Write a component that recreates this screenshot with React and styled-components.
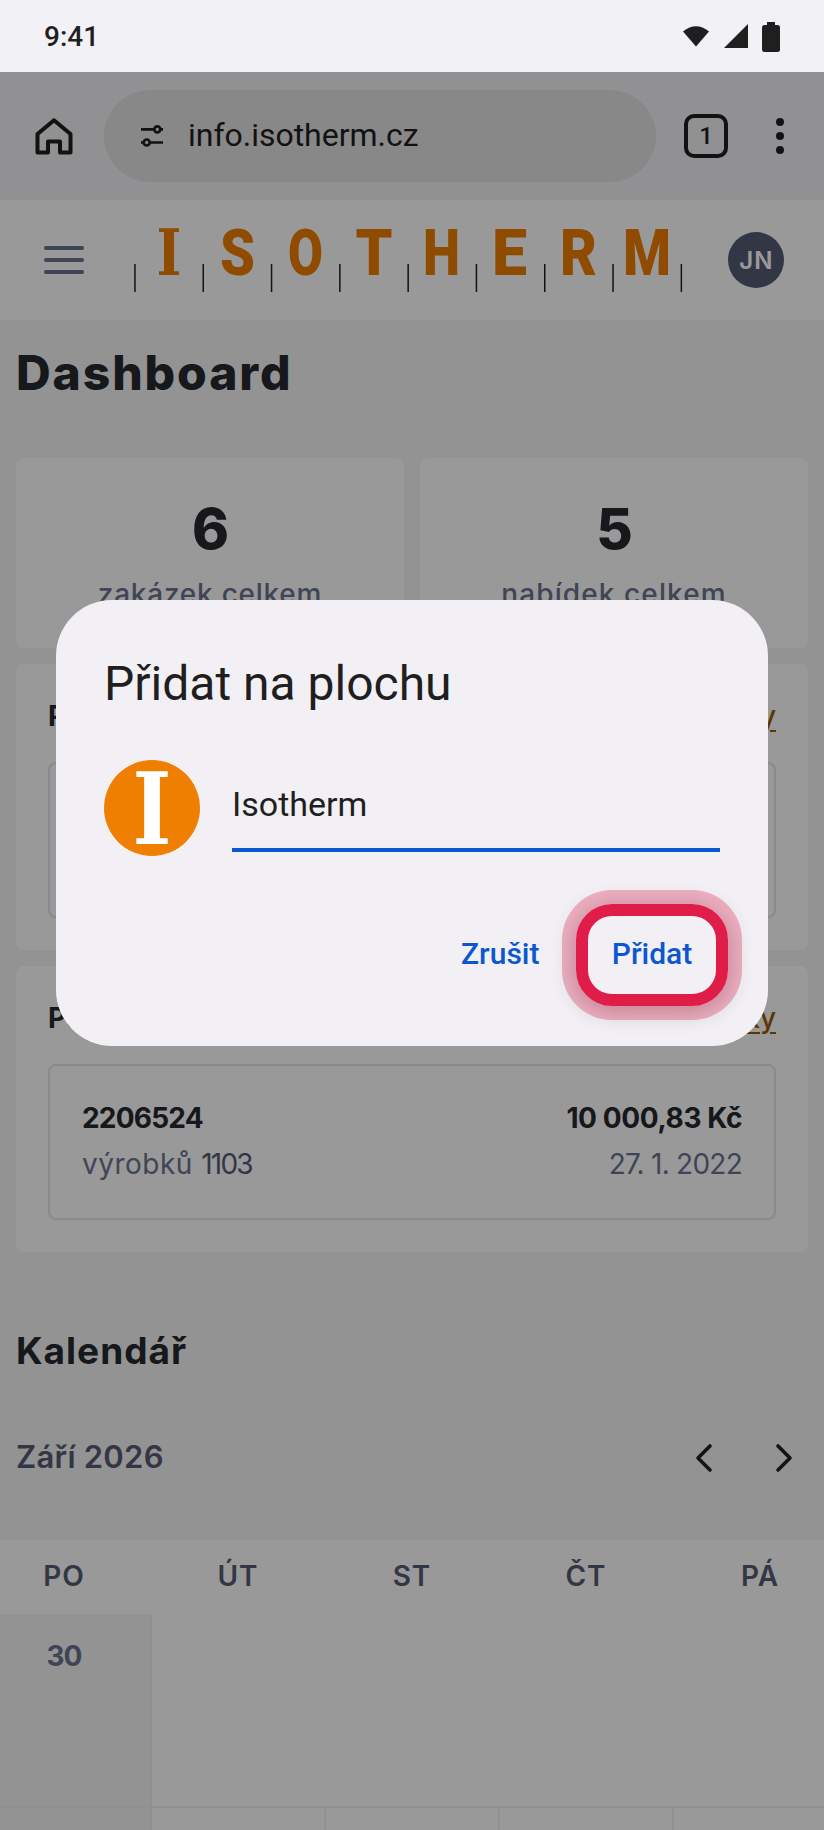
import React from "react";
import styled, { createGlobalStyle } from "styled-components";

const roboto = `Roboto, "Liberation Sans", sans-serif`;
const brand = `Inter, "Open Sans", sans-serif`;

const Global = createGlobalStyle`
  * { box-sizing: border-box; }
  body { margin: 0; background: #f5f5f5; font-family: ${brand}; color: #25282d; }
  h1, h2, h3, p { margin: 0; }
  button, input { font: inherit; border: 0; background: none; padding: 0; margin: 0; }
`;

const Phone = styled.div`
  width: 824px;
  height: 1830px;
  overflow: hidden;
  display: flex;
  flex-direction: column;
  position: relative;
`;

const StatusBar = styled.header`
  height: 72px;
  flex: none;
  padding: 0 44px 0 44px;
  display: flex;
  align-items: center;
  justify-content: space-between;
  background: #f2f1f6;
  color: #1f1f1f;
  font: 500 28px ${roboto};
`;

const StatusIcons = styled.svg`
  display: block;
`;

const Screen = styled.div`
  flex: 1;
  min-height: 0;
  overflow: hidden;
  background: #f5f5f5;
`;

const BrowserBar = styled.div`
  height: 128px;
  background: #f2f2f5;
  display: flex;
  align-items: center;
  padding: 0 32px 0 33px;
  color: #1f1f1f;
`;

const AddressPill = styled.div`
  width: 552px;
  height: 92px;
  margin: 0 28px 0 29px;
  padding-left: 36px;
  border-radius: 46px;
  background: #e3e3e5;
  display: flex;
  align-items: center;
  gap: 23px;
  font: 400 32px ${roboto};
  letter-spacing: -0.02px;
`;

const Url = styled.span`
  padding-bottom: 2px;
`;

const TabCount = styled.div`
  width: 44px;
  height: 44px;
  border: 4px solid #1f1f1f;
  border-radius: 10px;
  display: grid;
  place-items: center;
  font: 500 24px ${roboto};
`;

const MoreDots = styled.div`
  margin-left: 48px;
  display: grid;
  gap: 6px;
  i { width: 8px; height: 8px; border-radius: 50%; background: #1f1f1f; }
`;

const AppHeader = styled.div`
  height: 120px;
  background: #fff;
  display: flex;
  align-items: center;
  justify-content: space-between;
  padding: 0 40px 0 44px;
`;

const Burger = styled.div`
  width: 40px;
  display: grid;
  gap: 8px;
  i { height: 4px; border-radius: 2px; background: #6b7390; }
`;

const Logo = styled.svg`
  display: block;
  width: 550px;
  height: 120px;
  margin-left: 6px;
`;

const Avatar = styled.div`
  width: 56px;
  height: 56px;
  border-radius: 50%;
  background: #555c73;
  color: #fff;
  display: grid;
  place-items: center;
  font-weight: 600;
  font-size: 24px;
  letter-spacing: 1.2px;
  padding-left: 1px;
`;

const Main = styled.main`
  padding: 16px 16px 0;
`;

const PageTitle = styled.h1`
  height: 122px;
  line-height: 73px;
  font-size: 48px;
  font-weight: 800;
  letter-spacing: 1.9px;
`;

const Stats = styled.div`
  display: grid;
  grid-template-columns: 1fr 1fr;
  gap: 16px;
`;

const Card = styled.section`
  background: #fff;
  border-radius: 8px;
`;

const StatCard = styled(Card)`
  height: 190px;
  padding-top: 36px;
  text-align: center;
`;

const StatValue = styled.div`
  font-size: 56px;
  line-height: 71px;
  font-weight: 800;
  letter-spacing: -1px;
`;

const StatLabel = styled.div`
  margin-top: 8px;
  font-size: 28px;
  line-height: 42px;
  font-weight: 500;
  letter-spacing: ${(p) => p.$tracking};
  color: #6b7390;
`;

const OrdersCard = styled(Card)`
  margin-top: 16px;
  height: 286px;
  padding: 31px 32px 32px;
`;

const CardHead = styled.div`
  display: flex;
  justify-content: space-between;
  height: 67px;
  line-height: 42px;
  font-size: 28px;
`;

const CardTitle = styled.h3`
  font-size: 28px;
  font-weight: 700;
`;

const CardLink = styled.a`
  color: #9c5a08;
  font-weight: 500;
  text-decoration: underline;
  text-underline-offset: 4px;
  text-decoration-thickness: 2px;
`;

const Order = styled.div`
  height: 156px;
  border: 2px solid #e3e5e6;
  border-radius: 8px;
  padding: 29px 32px 0;
`;

const OrderLine = styled.div`
  display: flex;
  justify-content: space-between;
  height: 46px;
  line-height: 46px;
  font-size: 28px;
  font-weight: ${(p) => (p.$strong ? 700 : 400)};
  color: ${(p) => (p.$strong ? "#25282d" : "#6b7390")};
`;

const Tracked = styled.span`
  letter-spacing: ${(p) => p.$by};
  white-space: pre;
`;

const Quantity = styled.span`
  color: #555c73;
  letter-spacing: -1.8px;
`;

const SectionTitle = styled.h2`
  margin-top: 69px;
  height: 61px;
  line-height: 60px;
  font-size: 37px;
  font-weight: 700;
  letter-spacing: 1px;
`;

const MonthBar = styled.div`
  margin-top: 46px;
  height: 112px;
  padding: 0 15px 0 0;
  display: flex;
  justify-content: space-between;
  align-items: flex-start;
  line-height: 58px;
  font-size: 31px;
  font-weight: 600;
  color: #555c73;
`;

const Arrows = styled.div`
  display: flex;
  gap: 62px;
  padding-top: 15px;
`;

const Calendar = styled.div`
  margin-left: -22px;
  width: 870px;
  display: grid;
  grid-template-columns: repeat(5, 174px);
  background: #fff;
  font-size: 28px;
  text-align: center;
`;

const DayName = styled.div`
  height: 74px;
  line-height: 72px;
  padding-right: 2px;
  font-weight: 600;
  color: #555c73;
  letter-spacing: 0.9px;
`;

const DayCell = styled.div`
  height: 194px;
  padding-top: 21px;
  line-height: 42px;
  font-weight: 700;
  letter-spacing: -0.9px;
  color: #6b7390;
  background: ${(p) => (p.$muted ? "#f5f5f5" : "#fff")};
  border-bottom: 2px solid #f0f0f0;
  border-right: 2px solid ${(p) => (p.$lined ? "#f0f0f0" : "transparent")};
`;

const Scrim = styled.div`
  position: absolute;
  inset: 72px 0 0;
  background: rgba(0, 0, 0, 0.4);
`;

const Dialog = styled.div`
  position: absolute;
  left: 56px;
  top: 600px;
  width: 712px;
  height: 446px;
  border-radius: 56px;
  background: #f2f0f5;
  color: #1f1f1f;
  padding: 48px;
  font-family: ${roboto};
`;

const DialogTitle = styled.h2`
  font-size: 48px;
  line-height: 72px;
  font-weight: 400;
`;

const NameRow = styled.div`
  margin-top: 40px;
  display: flex;
  gap: 32px;
`;

const AppIcon = styled.svg`
  width: 96px;
  height: 96px;
  flex: none;
`;

const NameInput = styled.input`
  flex: 1;
  min-width: 0;
  height: 92px;
  border-bottom: 4px solid #0b57d0;
  color: #1f1f1f;
  font-size: 34px;
  padding-bottom: 1px;
  border-radius: 0;
  outline: 0;
`;

const Actions = styled.div`
  margin-top: 48px;
  margin-right: -8px;
  display: flex;
  justify-content: flex-end;
  gap: 36.5px;
`;

const TextButton = styled.button`
  height: 102px;
  padding-bottom: 4px;
  color: #0b57d0;
  font-size: 30px;
  font-weight: 500;
`;

const RingedButton = styled(TextButton)`
  width: 152px;
  border: 12px solid #e01c48;
  border-radius: 36px;
  box-shadow: 0 0 0 14px rgba(224, 28, 72, 0.3), 0 4px 24px rgba(0, 0, 0, 0.3);
`;

const LETTERS = [
  ["S", 87, 32],
  ["O", 155, 32],
  ["T", 222.5, 34],
  ["H", 290, 34],
  ["E", 359, 32],
  ["R", 427, 34],
  ["M", 490, 45],
];

const Chevron = ({ flip }) => (
  <svg width="18" height="30" viewBox="0 0 18 30" fill="none" stroke="#1f2023" strokeWidth="3.6" strokeLinecap="round" strokeLinejoin="round">
    <path d={flip ? "M3 3l12 12L3 27" : "M15 3L3 15l12 12"} />
  </svg>
);

const OrderCard = ({ title, link }) => (
  <OrdersCard>
    <CardHead>
      <CardTitle>{title}</CardTitle>
      <CardLink>{link}</CardLink>
    </CardHead>
    <Order>
      <OrderLine $strong>
        <Tracked $by="-0.8px">2206524</Tracked>
        <Tracked $by="-0.4px">10 000,83 Kč</Tracked>
      </OrderLine>
      <OrderLine>
        <Tracked $by="0.5px">výrobků <Quantity>1103</Quantity></Tracked>
        <Tracked $by="-0.75px">27. 1. 2022</Tracked>
      </OrderLine>
    </Order>
  </OrdersCard>
);

export default function App() {
  return (
    <Phone>
      <Global />
      <StatusBar>
        <span>9:41</span>
        <StatusIcons width="98" height="32" viewBox="682 20 98 32" fill="#1f1f1f">
          <path d="M683 31.5Q696 21 709 31.5L696 46.5z" />
          <path d="M724 48L748 24V48z" />
          <path d="M767 22h8v3h2.500a2.500 2.500 0 0 1 2.500 2.500v22a2.500 2.500 0 0 1-2.500 2.500h-13a2.500 2.500 0 0 1-2.500-2.500v-22a2.500 2.500 0 0 1 2.500-2.500h2.500z" />
        </StatusIcons>
      </StatusBar>
      <Screen>
        <BrowserBar>
          <svg width="42" height="42" viewBox="33 115 42 42" fill="none" stroke="#1f1f1f" strokeWidth="4" strokeLinejoin="round">
            <path d="M37.500 152.500V134L54 120.200L70.500 134V152.500H60V141.500H48V152.500z" />
          </svg>
          <AddressPill>
            <svg width="25" height="24" viewBox="140 124 25 24" fill="none" stroke="#1f1f1f" strokeWidth="2.700">
              <path d="M141 129.300h13M160 129.300h3M163 142.500h-13M145 142.500h-4" />
              <circle cx="157.300" cy="129.300" r="3" />
              <circle cx="146.700" cy="142.500" r="3" />
            </svg>
            <Url>info.isotherm.cz</Url>
          </AddressPill>
          <TabCount>1</TabCount>
          <MoreDots><i /><i /><i /></MoreDots>
        </BrowserBar>
        <AppHeader>
          <Burger><i /><i /><i /></Burger>
          <Logo viewBox="134 200 550 120">
            {Array.from({ length: 9 }, (_, i) => (
              <rect key={i} x={134.200 + i * 68.300} y="264" width="1.500" height="28" fill="#202020" />
            ))}
            <g fill="#ef7f00" fontWeight="700">
              <text x="156.500" y="275" fontFamily="DejaVu Serif" fontSize="63.500" textLength="25" lengthAdjust="spacingAndGlyphs">I</text>
              {LETTERS.map(([ch, x, w]) => (
                <text key={ch} x={x + 133} y="275" fontFamily="Roboto" fontWeight="900" fontSize="65" textLength={w + 3} lengthAdjust="spacingAndGlyphs">{ch}</text>
              ))}
            </g>
          </Logo>
          <Avatar>JN</Avatar>
        </AppHeader>
        <Main>
          <PageTitle>Dashboard</PageTitle>
          <Stats>
            <StatCard>
              <StatValue>6</StatValue>
              <StatLabel $tracking="0.75px">zakázek celkem</StatLabel>
            </StatCard>
            <StatCard>
              <StatValue>5</StatValue>
              <StatLabel $tracking="1.1px">nabídek celkem</StatLabel>
            </StatCard>
          </Stats>
          <OrderCard title="Poslední zakázky" link="Všechny zakázky" />
          <OrderCard title="Poslední nabídky" link="Všechny nabídky" />
          <SectionTitle>Kalendář</SectionTitle>
          <MonthBar>
            <Tracked $by="0.25px">Září 2026</Tracked>
            <Arrows><Chevron /><Chevron flip /></Arrows>
          </MonthBar>
        </Main>
        <Calendar>
          {["PO", "ÚT", "ST", "ČT", "PÁ"].map((d) => <DayName key={d}>{d}</DayName>)}
          <DayCell $muted $lined>30</DayCell>
          <DayCell /><DayCell /><DayCell /><DayCell />
          <DayCell $muted $lined />
          <DayCell $lined /><DayCell $lined /><DayCell $lined /><DayCell />
        </Calendar>
      </Screen>
      <Scrim />
      <Dialog>
        <DialogTitle>Přidat na plochu</DialogTitle>
        <NameRow>
          <AppIcon viewBox="0 0 96 96">
            <circle cx="48" cy="48" r="48" fill="#ef7f00" />
            <text x="28.500" y="84" fill="#fff" fontFamily="DejaVu Serif" fontWeight="700" fontSize="98.700" textLength="39" lengthAdjust="spacingAndGlyphs">I</text>
          </AppIcon>
          <NameInput defaultValue="Isotherm" />
        </NameRow>
        <Actions>
          <TextButton>Zrušit</TextButton>
          <RingedButton>Přidat</RingedButton>
        </Actions>
      </Dialog>
    </Phone>
  );
}
